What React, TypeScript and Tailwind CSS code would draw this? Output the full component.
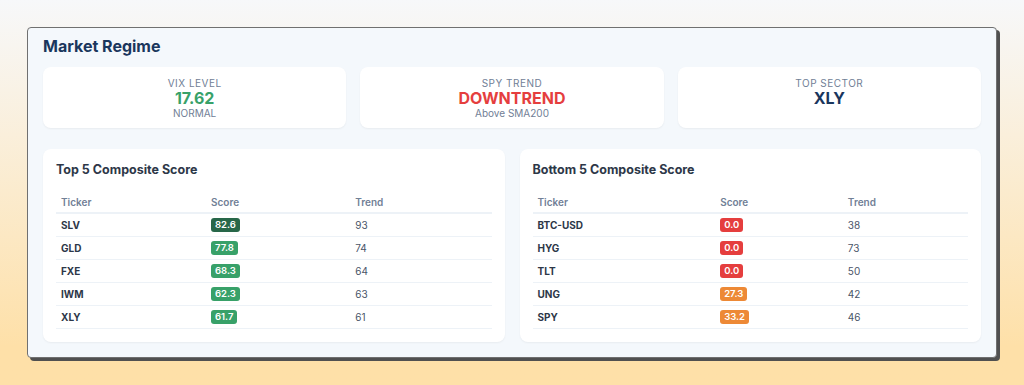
import React from 'react'

type Row = { ticker: string; score: number; trend: number }

const topRows: Row[] = [
  { ticker: 'SLV', score: 82.6, trend: 93 },
  { ticker: 'GLD', score: 77.8, trend: 74 },
  { ticker: 'FXE', score: 68.3, trend: 64 },
  { ticker: 'IWM', score: 62.3, trend: 63 },
  { ticker: 'XLY', score: 61.7, trend: 61 },
]

const bottomRows: Row[] = [
  { ticker: 'BTC-USD', score: 0.0, trend: 38 },
  { ticker: 'HYG', score: 0.0, trend: 73 },
  { ticker: 'TLT', score: 0.0, trend: 50 },
  { ticker: 'UNG', score: 27.3, trend: 42 },
  { ticker: 'SPY', score: 33.2, trend: 46 },
]

const badgeColor = (score: number) => {
  if (score >= 80) return 'bg-[#276749]'
  if (score >= 60) return 'bg-[#38a169]'
  if (score >= 20) return 'bg-[#ed8936]'
  return 'bg-[#e53e3e]'
}

function StatCard({ label, value, sub, valueClass }: { label: string; value: string; sub?: string; valueClass: string }) {
  return (
    <div className="h-[61px] bg-white rounded-lg shadow-[0_1px_2px_rgba(0,0,0,0.05)] flex flex-col items-center pt-[10px]">
      <div className="text-[10px] leading-[13px] tracking-[0.05em] uppercase text-[#718096]">{label}</div>
      <div className={`text-[16px] leading-[16px] font-bold ${valueClass}`}>{value}</div>
      {sub && <div className="text-[10px] leading-[13px] mt-[1px] text-[#718096]">{sub}</div>}
    </div>
  )
}

function ScoreTable({ title, rows }: { title: string; rows: Row[] }) {
  return (
    <div className="bg-white rounded-lg shadow-[0_1px_2px_rgba(0,0,0,0.05)] px-[13px] pt-[12px] pb-[13px]">
      <h2 className="text-[12.5px] leading-[18px] font-bold text-[#2d3748] mb-[15px]">{title}</h2>
      <table className="w-full border-collapse text-left">
        <thead>
          <tr className="border-b-2 border-[#edf2f7]">
            <th className="px-[5px] pb-[2px] text-[10px] leading-[16px] font-semibold text-[#718096]">Ticker</th>
            <th className="px-[5px] pb-[2px] text-[10px] leading-[16px] font-semibold text-[#718096]">Score</th>
            <th className="px-[5px] pb-[2px] text-[10px] leading-[16px] font-semibold text-[#718096]">Trend</th>
          </tr>
        </thead>
        <tbody>
          {rows.map((row) => (
            <tr key={row.ticker} className="border-b border-[#edf2f7]">
              <td className="px-[5px] py-[4px] text-[10px] leading-[14px] font-bold text-[#2d3748]">{row.ticker}</td>
              <td className="px-[5px] py-[4px]">
                <div className="flex">
                  <span className={`px-[4px] rounded-[3px] text-[9.5px] leading-[14px] font-semibold text-white ${badgeColor(row.score)}`}>
                    {row.score.toFixed(1)}
                  </span>
                </div>
              </td>
              <td className="px-[5px] py-[4px] text-[10px] leading-[14px] text-[#4a5568]">{row.trend}</td>
            </tr>
          ))}
        </tbody>
      </table>
    </div>
  )
}

export default function App() {
  return (
    <div className="w-[1024px] h-[385px] overflow-hidden bg-linear-to-b from-[#f7f8fa] to-[#fee0a8] to-90% pt-[27px] pl-[27px] font-['Inter','Noto_Sans',sans-serif]">
      <div className="w-[970px] h-[331px] bg-[#f4f8fc] border border-[#707070] rounded-[4px] shadow-[3px_3px_0_#505050] px-[15px] pt-[6px]">
        <h1 className="text-[16px] leading-[24px] font-bold text-[#1a365d] mb-[9px]">Market Regime</h1>
        <div className="grid grid-cols-3 gap-[14px] mb-[21px]">
          <StatCard label="VIX Level" value="17.62" sub="NORMAL" valueClass="text-[#38a169]" />
          <StatCard label="SPY Trend" value="DOWNTREND" sub="Above SMA200" valueClass="text-[#e53e3e]" />
          <StatCard label="Top Sector" value="XLY" valueClass="text-[#1a365d]" />
        </div>
        <div className="grid grid-cols-2 gap-[15px]">
          <ScoreTable title="Top 5 Composite Score" rows={topRows} />
          <ScoreTable title="Bottom 5 Composite Score" rows={bottomRows} />
        </div>
      </div>
    </div>
  )
}
